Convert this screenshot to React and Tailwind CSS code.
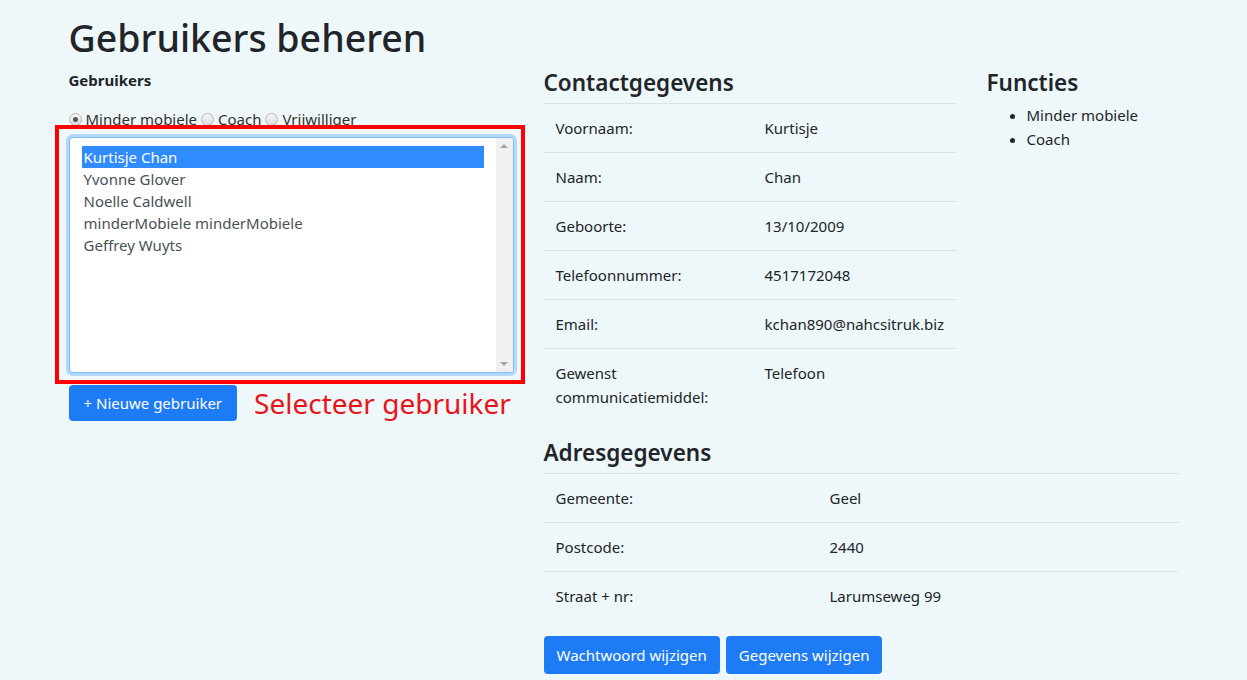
import React from 'react';

const font = { fontFamily: '"Segoe UI", "Noto Sans", sans-serif' };

const users = [
  'Kurtisje Chan',
  'Yvonne Glover',
  'Noelle Caldwell',
  'minderMobiele minderMobiele',
  'Geffrey Wuyts',
];

const contact = [
  ['Voornaam:', 'Kurtisje'],
  ['Naam:', 'Chan'],
  ['Geboorte:', '13/10/2009'],
  ['Telefoonnummer:', '4517172048'],
  ['Email:', 'kchan890@nahcsitruk.biz'],
  ['Gewenst communicatiemiddel:', 'Telefoon'],
];

const adres = [
  ['Gemeente:', 'Geel'],
  ['Postcode:', '2440'],
  ['Straat + nr:', 'Larumseweg 99'],
];

const Radio = ({ checked, label }) => (
  <label className="flex items-center gap-[4px]">
    <span className="w-[13px] h-[13px] rounded-full border border-[#b5b5b5] bg-gradient-to-b from-[#f6f6f6] to-[#dcdcdc] flex items-center justify-center">
      {checked && <span className="w-[5px] h-[5px] rounded-full bg-[#555]" />}
    </span>
    <span>{label}</span>
  </label>
);

const InfoTable = ({ rows, labelWidth }) => (
  <table className="w-full border-collapse">
    <tbody>
      {rows.map(([k, v]) => (
        <tr key={k} className="border-t border-[#dee2e6]">
          <td className="px-[12px] py-[12px] align-top leading-[24px]" style={{ width: labelWidth }}>
            {k}
          </td>
          <td className="px-[12px] py-[12px] align-top leading-[24px] whitespace-nowrap">{v}</td>
        </tr>
      ))}
    </tbody>
  </table>
);

export default function App() {
  return (
    <div className="min-h-screen bg-[#eef7fa] text-[#212529] text-[15px] leading-[24px]" style={font}>
      <div className="max-w-[1140px] mx-auto px-[15px]">
        <h1 className="text-[37.5px] leading-[48px] font-medium pt-[14px] mb-[8px]">Gebruikers beheren</h1>
        <div className="flex">
          {/* left column */}
          <div className="w-[445px] shrink-0 relative">
            <div className="text-[15px] font-bold leading-[21px] mb-[17px]">Gebruikers</div>
            <div className="flex items-center gap-[4px] text-[#333] leading-[22px] h-[22px] mb-[7px]">
              <Radio checked label="Minder mobiele" />
              <Radio label="Coach" />
              <Radio label="Vrijwilliger" />
            </div>
            <div className="h-[236px] bg-white border border-[#80bdff] rounded-[4px] shadow-[0_0_0_3px_rgba(0,123,255,0.25)] flex overflow-hidden">
              <div className="flex-1 pl-[12px] pr-[12px] pt-[8px] text-[#495057]">
                {users.map((u, i) => (
                  <div
                    key={u}
                    className={i === 0 ? 'bg-[#2f8bff] text-white px-[2px] leading-[22px]' : 'px-[2px] leading-[22px]'}
                  >
                    {u}
                  </div>
                ))}
              </div>
              <div className="w-[17px] bg-[#f0f0f0] flex flex-col justify-between items-center py-[6px]">
                <span className="w-0 h-0 border-l-[4px] border-r-[4px] border-b-[4px] border-l-transparent border-r-transparent border-b-[#a3a3a3]" />
                <span className="w-0 h-0 border-l-[4px] border-r-[4px] border-t-[4px] border-l-transparent border-r-transparent border-t-[#a3a3a3]" />
              </div>
            </div>
            <div className="flex items-center mt-[12px]">
              <button className="bg-[#1e7bf6] text-white rounded-[4px] px-[15px] py-[6px] leading-[24px] whitespace-nowrap">
                + Nieuwe gebruiker
              </button>
              <span className="ml-[17px] text-[#e8141a] text-[28px] leading-[36px] whitespace-nowrap">
                Selecteer gebruiker
              </span>
            </div>
            {/* annotation frame */}
            <div className="absolute left-[-14px] top-[55px] w-[470px] h-[259px] border-[4px] border-[#f00] pointer-events-none" />
          </div>

          {/* right column */}
          <div className="ml-[30px] w-[635px] shrink-0">
            <div className="flex">
              <div className="w-[413px] shrink-0">
                <h3 className="text-[22.5px] leading-[25px] font-semibold mb-[8px]">Contactgegevens</h3>
                <InfoTable rows={contact} labelWidth="209px" />
              </div>
              <div className="ml-[30px] flex-1">
                <h3 className="text-[22.5px] leading-[25px] font-semibold mb-[8px]">Functies</h3>
                <ul className="list-disc pl-[40px]">
                  <li>Minder mobiele</li>
                  <li>Coach</li>
                </ul>
              </div>
            </div>
            <h3 className="text-[22.5px] leading-[25px] font-semibold mt-[19px] mb-[8px]">Adresgegevens</h3>
            <InfoTable rows={adres} labelWidth="274px" />
            <div className="flex gap-[6px] mt-[16px]">
              <button className="bg-[#1e7bf6] text-white rounded-[4px] px-[13px] py-[7px] leading-[24px]">
                Wachtwoord wijzigen
              </button>
              <button className="bg-[#1e7bf6] text-white rounded-[4px] px-[13px] py-[7px] leading-[24px]">
                Gegevens wijzigen
              </button>
            </div>
          </div>
        </div>
      </div>
    </div>
  );
}
